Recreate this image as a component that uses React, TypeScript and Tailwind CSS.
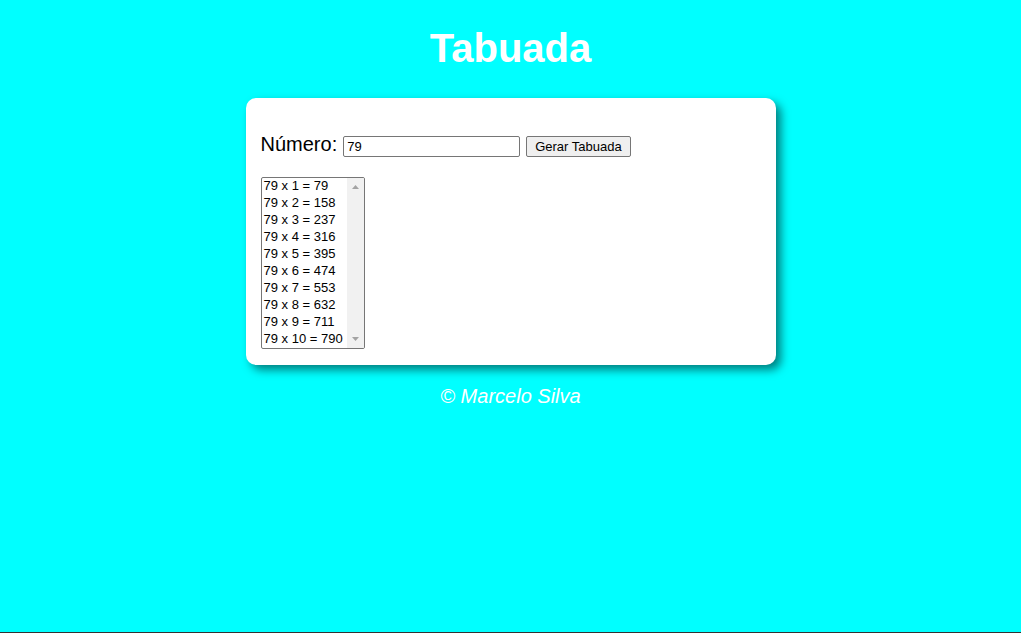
const numero = 79;
const linhas = Array.from({ length: 10 }, (_, i) => `${numero} x ${i + 1} = ${numero * (i + 1)}`);

export default function App() {
  return (
    <div className="flex min-h-screen flex-col border-b border-[#333333] bg-[#00ffff] font-['Liberation_Sans',Arial,sans-serif] text-xl leading-6 text-black">
      <header className="pt-6 text-center text-white">
        <h1 className="text-[40px] leading-12 font-bold">Tabuada</h1>
      </header>
      <main className="mx-auto mt-[26px] w-[530px] max-w-full rounded-[10px] bg-white px-[15px] pt-[34px] pb-4 shadow-[5px_5px_10px_rgba(0,0,0,0.5)]">
        <div className="flex items-baseline">
          <label htmlFor="numero" className="mr-[6px]">Número:</label>
          <input
            id="numero"
            type="number"
            defaultValue={numero}
            className="mr-[6px] h-[21px] w-[177px] rounded-xs border border-[#767676] bg-white px-[3px] text-[13px] leading-[15px]"
          />
          <button type="button" className="h-[21px] rounded-xs border border-[#767676] bg-[#efefef] px-2 text-[13px] leading-[15px]">
            Gerar Tabuada
          </button>
        </div>
        <div className="mt-5 flex w-[104px] overflow-hidden rounded-xs border border-[#767676] bg-white">
          <select aria-label="Tabuada" size={10} className="h-[170px] min-w-0 flex-1 appearance-none overflow-hidden text-[13px] outline-none">
            {linhas.map((linha) => (
              <option key={linha} className="h-[17px] min-h-0 px-[2px] pb-px text-[13px] leading-4">
                {linha}
              </option>
            ))}
          </select>
          <div aria-hidden="true" className="flex w-[17px] flex-col items-center justify-between bg-[#f1f1f1] py-[7px]">
            <svg width="7" height="4" fill="#a3a3a3"><path d="M0 4L3.5 0L7 4Z" /></svg>
            <svg width="7" height="4" fill="#a3a3a3"><path d="M0 0L3.5 4L7 0Z" /></svg>
          </div>
        </div>
      </main>
      <footer className="mt-[19px] text-center text-white italic">
        <p>© Marcelo Silva</p>
      </footer>
    </div>
  );
}
